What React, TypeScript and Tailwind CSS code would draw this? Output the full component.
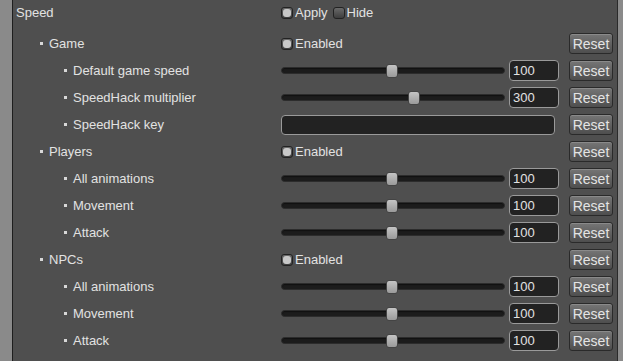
import React from 'react';

type Row =
    | { kind: 'head'; label: string; level: number }
    | { kind: 'slider'; label: string; level: number; value: number; pos: number }
    | { kind: 'key'; label: string; level: number };

const rows: Row[] = [
    { kind: 'head', label: 'Game', level: 1 },
    { kind: 'slider', label: 'Default game speed', level: 2, value: 100, pos: 50 },
    { kind: 'slider', label: 'SpeedHack multiplier', level: 2, value: 300, pos: 60 },
    { kind: 'key', label: 'SpeedHack key', level: 2 },
    { kind: 'head', label: 'Players', level: 1 },
    { kind: 'slider', label: 'All animations', level: 2, value: 100, pos: 50 },
    { kind: 'slider', label: 'Movement', level: 2, value: 100, pos: 50 },
    { kind: 'slider', label: 'Attack', level: 2, value: 100, pos: 50 },
    { kind: 'head', label: 'NPCs', level: 1 },
    { kind: 'slider', label: 'All animations', level: 2, value: 100, pos: 50 },
    { kind: 'slider', label: 'Movement', level: 2, value: 100, pos: 50 },
    { kind: 'slider', label: 'Attack', level: 2, value: 100, pos: 50 },
];

function Check({ checked, label }: { checked: boolean; label: string }) {
    return (
        <span className="flex items-center gap-[2px]">
            <span className="w-[12px] h-[12px] rounded-[3px] border border-[#222] bg-gradient-to-b from-[#6a6a6a] to-[#3e3e3e] flex items-center justify-center">
                {checked && <span className="w-[8px] h-[8px] rounded-[3px] bg-[#c8c8c8]" />}
            </span>
            <span>{label}</span>
        </span>
    );
}

function ResetButton() {
    return (
        <button className="w-[44px] h-[21px] rounded-[3px] border border-[#2a2a2a] bg-gradient-to-b from-[#767676] to-[#4e4e4e] text-[#e4e4e4] text-[14px] leading-none shadow-[inset_0_1px_0_#8a8a8a]">
            Reset
        </button>
    );
}

function Slider({ pos }: { pos: number }) {
    return (
        <div className="relative w-[224px] h-[14px] flex items-center">
            <div className="w-full h-[7px] rounded-full bg-[#1c1c1c] border border-[#2c2c2c] shadow-[inset_0_1px_1px_#111]" />
            <div
                className="absolute top-0 w-[12px] h-[14px] rounded-[3px] bg-gradient-to-b from-[#c4c4c4] to-[#9a9a9a] border border-[#444]"
                style={{ left: `calc(${pos}% - 7px)` }}
            />
        </div>
    );
}

export default function App() {
    return (
        <div className="w-[623px] h-[361px] flex bg-[#4f4f4f] text-[#e2e2e2] text-[13px] overflow-hidden" style={{ fontFamily: '"Liberation Sans", Arial, sans-serif' }}>
            <div className="w-[12px] bg-[#8a8a8a]" />
            <div className="w-[1px] bg-[#1e1e1e]" />
            <div className="flex-1 flex flex-col">
                <div className="h-[26px] mb-[4px] flex items-center">
                    <div className="w-[268px] pl-[3px]">Speed</div>
                    <div className="flex items-center gap-[5px]">
                        <Check checked label="Apply" />
                        <Check checked={false} label="Hide" />
                    </div>
                </div>
                {rows.map((row, i) => (
                    <div key={i} className="h-[27px] flex items-center">
                        <div className={`w-[268px] flex items-center ${row.level === 1 ? 'pl-[27px]' : 'pl-[51px]'}`}>
                            <span className="w-[3px] h-[3px] bg-[#d8d8d8] mr-[6px]" />
                            <span>{row.label}</span>
                        </div>
                        <div className="w-[288px] flex items-center">
                            {row.kind === 'head' && <Check checked label="Enabled" />}
                            {row.kind === 'slider' && (
                                <>
                                    <Slider pos={row.pos} />
                                    <div className="ml-[4px] w-[50px] h-[21px] rounded-[4px] border border-[#9a9a9a] bg-[#222] pl-[3px] flex items-center">
                                        {row.value}
                                    </div>
                                </>
                            )}
                            {row.kind === 'key' && (
                                <div className="w-[274px] h-[20px] rounded-[4px] border border-[#9a9a9a] bg-[#222]" />
                            )}
                        </div>
                        <ResetButton />
                    </div>
                ))}
            </div>
            <div className="w-[1px] bg-[#2a2a2a]" />
            <div className="w-[5px] bg-[#8a8a8a]" />
        </div>
    );
}
